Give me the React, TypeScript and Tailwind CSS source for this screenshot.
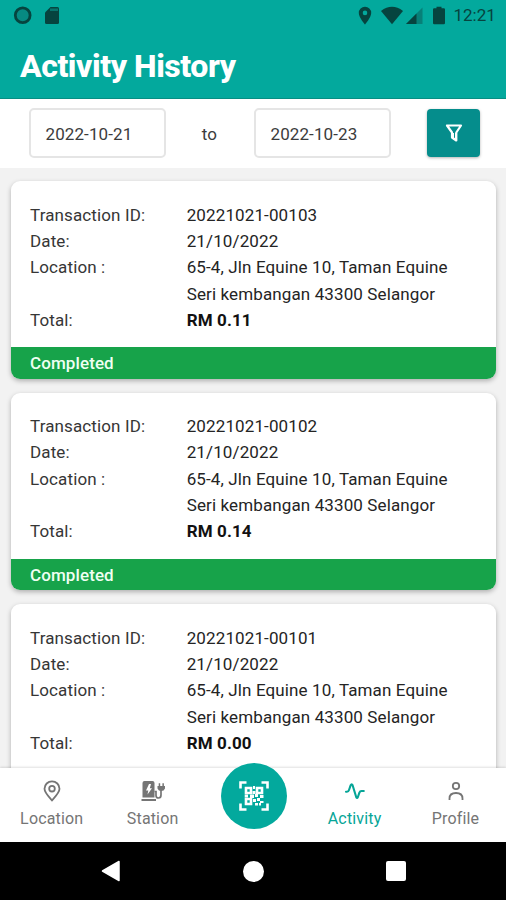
import React from "react";

const transactions = [
    { id: "20221021-00103", date: "21/10/2022", total: "RM 0.11" },
    { id: "20221021-00102", date: "21/10/2022", total: "RM 0.14" },
    { id: "20221021-00101", date: "21/10/2022", total: "RM 0.00" },
];

const StatusBar = () => {
    return (
        <div className="flex h-8 items-center justify-between pl-[13px] pr-[10px] text-[#06443f]">
            <div className="flex items-center gap-[12px]">
                <svg width="20" height="20" viewBox="0 0 20 20">
                    <circle cx="9.7" cy="9.3" r="7.4" fill="#078a82" stroke="currentColor" strokeWidth="2.8" />
                </svg>
                <svg width="15" height="20" viewBox="0 0 15 20">
                    <path d="M0 6.5L5.5 1H12.5Q14 1 14 2.5V16.5Q14 18 12.5 18H1.5Q0 18 0 16.5Z" fill="currentColor" />
                    <path d="M5 2.5H13V5H5Z" fill="#08756e" />
                </svg>
            </div>
            <div className="flex items-center">
                <svg width="14" height="20" viewBox="0 0 14 20">
                    <path
                        d="M7 .8A6.2 6.2 0 0 0 .8 7C.8 11.5 7 18.5 7 18.5S13.2 11.5 13.2 7A6.2 6.2 0 0 0 7 .8ZM7 9.2A2.3 2.3 0 1 1 7 4.6A2.3 2.3 0 0 1 7 9.2Z"
                        fill="currentColor"
                    />
                </svg>
                <svg className="ml-[9px]" width="22" height="20" viewBox="0 0 22 20">
                    <path d="M0 5Q11 -3.4 22 5L11 18.2Z" fill="currentColor" />
                </svg>
                <svg className="ml-[3px]" width="17" height="20" viewBox="0 0 17 20">
                    <path d="M0 18L16.5 1.5V18Z" fill="#078078" />
                    <path d="M0 18L10.5 7.5V18Z" fill="currentColor" />
                </svg>
                <svg className="ml-[10px]" width="12" height="20" viewBox="0 0 12 20">
                    <path d="M3.5 .7H8.5V2.3H10.8Q12 2.3 12 3.5V17Q12 18.2 10.8 18.2H1.2Q0 18.2 0 17V3.5Q0 2.3 1.2 2.3H3.5Z" fill="currentColor" />
                </svg>
                <p className="ml-[9px] w-[42.5px] whitespace-nowrap text-[17px]">12:21</p>
            </div>
        </div>
    );
};

const DateInput = ({ value }: { value: string }) => {
    return (
        <div className="flex h-[50px] w-[137px] items-center rounded-[5px] border-2 border-[#e5e5e5] pl-[15px] pt-[3px] text-[17px] tracking-[0.1px] text-[#3c3c3c]">
            {value}
        </div>
    );
};

const Row = ({ label, children }: { label: string; children: React.ReactNode }) => {
    return (
        <div className="flex">
            <p className="w-[156.7px] shrink-0 text-[#363636]">{label}</p>
            <div className="whitespace-nowrap">{children}</div>
        </div>
    );
};

const TransactionCard = ({ id, date, total }: { id: string; date: string; total: string }) => {
    return (
        <div className="h-[197.5px] shrink-0 overflow-hidden rounded-[9px] bg-white shadow-[0_2px_5px_rgba(0,0,0,0.28)]">
            <div className="h-[166px] pl-[19.5px] pt-[20.7px] text-[17px] leading-[26.3px] tracking-[0.12px] text-[#242424]">
                <Row label="Transaction ID:">{id}</Row>
                <Row label="Date:">{date}</Row>
                <Row label="Location :">
                    <p>65-4, Jln Equine 10, Taman Equine</p>
                    <p>Seri kembangan 43300 Selangor</p>
                </Row>
                <Row label="Total:">
                    <span className="font-bold text-[#111]">{total}</span>
                </Row>
            </div>
            <div className="flex h-[31.5px] items-center bg-[#17a34a] pl-[19.5px] pt-[2.5px] text-[17px] font-medium tracking-[0.1px] text-[#effff2]">
                Completed
            </div>
        </div>
    );
};

const NavItem = ({ text, active, children }: { text: string; active?: boolean; children: React.ReactNode }) => {
    return (
        <div className={`flex w-[101.2px] flex-col items-center pt-[11px] ${active ? "text-[#06a597]" : "text-[#757575]"}`}>
            {children}
            <p className="mt-[3.5px] text-[16px] leading-6 tracking-[0.15px]">{text}</p>
        </div>
    );
};

const QrIcon = () => {
    return (
        <svg width="30" height="30" viewBox="0 0 30 30" fill="none" stroke="white" strokeWidth="2.6">
            <path d="M1.5 7.5V1.5H7.5M22.5 1.5H28.5V7.5M28.5 22.5V28.5H22.5M7.5 28.5H1.5V22.5" />
            <path d="M7 7H12V12H7ZM18 7H23V12H18ZM7 18H12V23H7Z" />
            <path
                d="M14 5H16V8H14ZM13.5 10H16.5V13H13.5ZM5.7 13.5H9V16.5H5.7ZM11 13.5H15V17H11ZM16 13H19V16H16ZM21 14H24.5V17H21ZM14 18H17V21H14ZM18 17H21V20H18ZM21 20H24.5V22H21ZM16 22H19V24.5H16ZM20 22H22V24.5H20Z"
                fill="white"
                stroke="none"
            />
        </svg>
    );
};

const App = () => {
    return (
        <div className="flex h-[900px] w-[506px] flex-col overflow-hidden bg-[#f2f2f2] font-[Roboto,sans-serif]">
            {/* header */}
            <div className="h-[99px] shrink-0 border-b border-[#078e83] bg-[#03a99d]">
                <StatusBar />
                <h1 className="pl-5 pt-[14px] text-[32px] font-extrabold leading-[40px] tracking-[-0.45px] text-white">Activity History</h1>
            </div>

            {/* date filter */}
            <div className="flex h-[69px] shrink-0 items-start bg-white pl-[28.5px] pt-[9px]">
                <DateInput value="2022-10-21" />
                <p className="w-[88px] pt-[14px] text-center text-[17px] leading-6 tracking-[0.1px] text-[#3c3c3c]">to</p>
                <DateInput value="2022-10-23" />
                <button className="ml-[36.5px] mt-px flex h-12 w-[53px] items-center justify-center rounded-[4px] bg-[#058d8c] shadow-[0_1px_3px_rgba(0,0,0,0.3)]">
                    <svg width="18" height="20" viewBox="0 0 18 20" fill="none" stroke="white" strokeWidth="2.2" strokeLinejoin="round">
                        <path d="M2 2.5H16L11.3 9.5V17.5L7 14.5V9.5Z" />
                        <path d="M8.5 10V15L10.5 16V10" strokeWidth="1" />
                    </svg>
                </button>
            </div>

            {/* transactions */}
            <div className="flex min-h-0 flex-1 flex-col gap-[14px] overflow-hidden px-[10.5px] pt-[13px]">
                {transactions.map((item, i) => (
                    <TransactionCard key={i} {...item} />
                ))}
            </div>

            {/* bottom tabs */}
            <div className="relative flex h-[74px] shrink-0 bg-white pl-[1.2px] shadow-[0_-1px_2px_rgba(0,0,0,0.12)]">
                <NavItem text="Location">
                    <svg width="24" height="24" viewBox="0 0 24 24" fill="none" stroke="currentColor" strokeWidth="1.8">
                        <path d="M12 21.3C9 18 4.5 13.7 4.5 9.8A7.5 7.5 0 0 1 19.5 9.8C19.5 13.7 15 18 12 21.3Z" />
                        <circle cx="12" cy="9.7" r="2.8" />
                    </svg>
                </NavItem>
                <NavItem text="Station">
                    <svg width="26" height="24" viewBox="0 0 26 24" fill="none">
                        <path d="M4.5 2H12.5Q14.5 2 14.5 4V18.5H2.5V4Q2.5 2 4.5 2ZM1.5 20H16V22H1.5Z" fill="currentColor" />
                        <path d="M9 5L6 11.5H8.3L7.5 15.5L12 9.2H9.8L11 5Z" fill="white" />
                        <path d="M14.5 12.5H16V16.5Q16 19 18.5 19Q21 19 21 16V11" stroke="currentColor" strokeWidth="1.7" />
                        <path d="M17.5 7H25V9.5Q24 12 21.3 12Q18.5 12 17.5 9.5ZM18.7 4.3H20.2V7H18.7ZM22.4 4.3H23.9V7H22.4Z" fill="currentColor" />
                    </svg>
                </NavItem>
                <div className="w-[101.2px]" />
                <NavItem text="Activity" active>
                    <svg width="24" height="24" viewBox="0 0 24 24" fill="none" stroke="currentColor" strokeWidth="2.1" strokeLinecap="round" strokeLinejoin="round">
                        <path d="M3 12.7H4Q5.5 12.7 6 11L7.7 6.2Q8.7 4.2 9.6 6.2L13.2 18Q14 20 14.9 18L16.4 13.6Q17 12 18.5 12H20.8" />
                    </svg>
                </NavItem>
                <NavItem text="Profile">
                    <svg width="24" height="24" viewBox="0 0 24 24" fill="none" stroke="currentColor" strokeWidth="1.8">
                        <circle cx="12" cy="7" r="3.2" />
                        <path d="M5.5 21V19.5Q5.5 14 12 14Q18.5 14 18.5 19.5V21" />
                    </svg>
                </NavItem>
                <button className="absolute left-[220.5px] top-[-5.5px] flex size-[66px] items-center justify-center rounded-full bg-[#03a99d]">
                    <QrIcon />
                </button>
            </div>

            {/* android navigation */}
            <div className="flex h-[58px] shrink-0 items-center justify-between bg-black pl-[101px] pr-[100px]">
                <svg width="20" height="22" viewBox="0 0 20 22">
                    <path d="M18 1.5V20.5L1.5 11Z" fill="white" stroke="white" strokeWidth="1.5" strokeLinejoin="round" />
                </svg>
                <div className="size-[21px] rounded-full bg-white" />
                <div className="size-5 rounded-[2px] bg-white" />
            </div>
        </div>
    );
};

export default App;
